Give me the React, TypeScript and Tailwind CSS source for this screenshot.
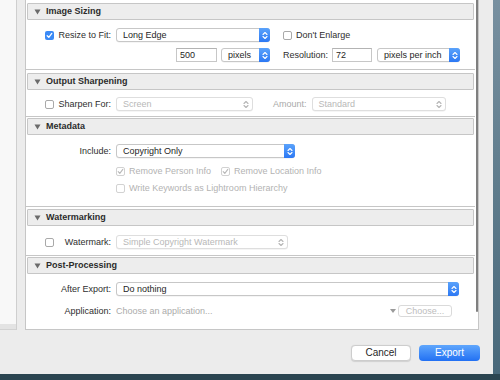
import React from 'react';

const FONT = "font-['Liberation_Sans',Arial,sans-serif]";

// Up/down chevrons used in macOS popup buttons
const Chevrons: React.FC<{ color: string }> = ({ color }) => (
  <svg width="6" height="9" viewBox="0 0 6 9" fill="none">
    <path d="M1 3.5 L3 1.5 L5 3.5" stroke={color} strokeWidth="1.1" strokeLinecap="round" strokeLinejoin="round" />
    <path d="M1 5.5 L3 7.5 L5 5.5" stroke={color} strokeWidth="1.1" strokeLinecap="round" strokeLinejoin="round" />
  </svg>
);

const Select: React.FC<{ value: string; width: string; disabled?: boolean }> = ({ value, width, disabled }) => (
  <div
    className={`${width} h-[14px] flex items-stretch rounded-[3px] border bg-white shadow-[0_0.5px_0.5px_rgba(0,0,0,0.08)] ${
      disabled ? 'border-[#dedede]' : 'border-[#c7c7c7]'
    }`}
  >
    <div className={`flex-1 pl-[6px] flex items-center text-[9px] leading-none truncate ${disabled ? 'text-[#b8b8b8]' : 'text-[#262626]'}`}>
      {value}
    </div>
    {disabled ? (
      <div className="w-[12px] flex items-center justify-center">
        <Chevrons color="#b5b5b5" />
      </div>
    ) : (
      <div className="w-[11px] -my-[1px] -mr-[1px] rounded-r-[3px] bg-gradient-to-b from-[#5aa2fb] to-[#2c78f4] flex items-center justify-center">
        <Chevrons color="#ffffff" />
      </div>
    )}
  </div>
);

const Input: React.FC<{ value: string; width: string }> = ({ value, width }) => (
  <div className={`${width} h-[14px] border border-[#c7c7c7] border-t-[#b3b3b3] bg-white pl-[3px] flex items-center text-[9px] leading-none text-[#262626]`}>
    {value}
  </div>
);

const Checkbox: React.FC<{ checked?: boolean; disabled?: boolean }> = ({ checked, disabled }) => {
  if (checked && !disabled) {
    return (
      <div className="w-[9px] h-[9px] rounded-[2px] bg-[#3b8af6] flex items-center justify-center shrink-0">
        <svg width="7" height="7" viewBox="0 0 7 7" fill="none">
          <path d="M1.2 3.7 L2.8 5.3 L5.8 1.4" stroke="white" strokeWidth="1.3" strokeLinecap="round" strokeLinejoin="round" />
        </svg>
      </div>
    );
  }
  return (
    <div
      className={`w-[9px] h-[9px] rounded-[2px] border bg-white flex items-center justify-center shrink-0 ${
        disabled ? 'border-[#d2d2d2]' : 'border-[#a9a9a9]'
      }`}
    >
      {checked && (
        <svg width="7" height="7" viewBox="0 0 7 7" fill="none">
          <path d="M1.2 3.7 L2.8 5.3 L5.8 1.4" stroke="#b9b9b9" strokeWidth="1.1" strokeLinecap="round" strokeLinejoin="round" />
        </svg>
      )}
    </div>
  );
};

const Label: React.FC<{ text: string; check?: boolean; checked?: boolean; disabled?: boolean }> = ({ text, check, checked, disabled }) => (
  <div className={`w-[85px] shrink-0 flex items-center ${check ? 'justify-between pl-[19px]' : 'justify-end'}`}>
    {check && <Checkbox checked={checked} />}
    <span className={`text-[9px] leading-none whitespace-nowrap ${disabled ? 'text-[#a9a9a9]' : 'text-[#2e2e2e]'}`}>{text}</span>
  </div>
);

const Header: React.FC<{ title: string; mt: string }> = ({ title, mt }) => (
  <div className={`${mt} mx-[1px] h-[17px] bg-[#ededed] border border-[#c6c6c6] rounded-[1px] flex items-center pl-[6px] gap-[5px]`}>
    <svg width="7" height="6" viewBox="0 0 7 6">
      <path d="M0.5 0.5 L6.5 0.5 L3.5 5.5 Z" fill="#6b6b6b" />
    </svg>
    <span className="text-[9px] font-bold text-[#2b2b2b] leading-none">{title}</span>
  </div>
);

const App: React.FC = () => {
  return (
    <div className={`w-[500px] h-[380px] flex flex-col bg-[#2c4652] overflow-hidden ${FONT}`}>
      <div className="flex h-[374px]">
        {/* Dialog window */}
        <div className="w-[493px] bg-[#ececec] flex flex-col">
          <div className="flex h-[330px]">
            {/* Left list panel */}
            <div className="w-[17px] h-[330px] flex flex-col border-r border-[#cfcfcf]">
              <div className="flex-1 bg-[#f8f8f8]" />
              <div className="h-[6px] bg-[#e3e3e3] border-b border-[#d2d2d2]" />
            </div>

            {/* Settings scroll panel */}
            <div className="ml-[8px] w-[454px] h-[330px] flex border-l border-b border-r border-[#c6c6c6] bg-white">
              <div className="w-[450px] flex flex-col">
                <div className="h-[2px]" />

                {/* Image Sizing */}
                <Header title="Image Sizing" mt="mt-[1px]" />
                <div className="h-[50px] pt-[8px] flex flex-col gap-[6px] border-b border-[#c6c6c6]">
                  <div className="flex items-center h-[14px]">
                    <Label text="Resize to Fit:" check checked />
                    <div className="ml-[5px] flex items-center">
                      <Select value="Long Edge" width="w-[154px]" />
                      <div className="ml-[13px] flex items-center gap-[4px]">
                        <Checkbox />
                        <span className="text-[9px] leading-none text-[#2e2e2e]">Don't Enlarge</span>
                      </div>
                    </div>
                  </div>
                  <div className="flex items-center h-[14px] pl-[150px]">
                    <Input value="500" width="w-[41px]" />
                    <div className="ml-[4px]">
                      <Select value="pixels" width="w-[49px]" />
                    </div>
                    <span className="ml-[13px] text-[9px] leading-none text-[#2e2e2e]">Resolution:</span>
                    <div className="ml-[4px]">
                      <Input value="72" width="w-[40px]" />
                    </div>
                    <div className="ml-[5px]">
                      <Select value="pixels per inch" width="w-[83px]" />
                    </div>
                  </div>
                </div>

                {/* Output Sharpening */}
                <Header title="Output Sharpening" mt="mt-[3px]" />
                <div className="h-[27px] pt-[7px] border-b border-[#c6c6c6]">
                  <div className="flex items-center h-[14px]">
                    <Label text="Sharpen For:" check />
                    <div className="ml-[5px]">
                      <Select value="Screen" width="w-[137px]" disabled />
                    </div>
                    <span className="ml-[20px] text-[9px] leading-none text-[#a9a9a9]">Amount:</span>
                    <div className="ml-[5px]">
                      <Select value="Standard" width="w-[134px]" disabled />
                    </div>
                  </div>
                </div>

                {/* Metadata */}
                <Header title="Metadata" mt="mt-[1px]" />
                <div className="h-[72px] pt-[9px] flex flex-col border-b border-[#c6c6c6]">
                  <div className="flex items-center h-[14px]">
                    <Label text="Include:" />
                    <div className="ml-[5px]">
                      <Select value="Copyright Only" width="w-[179px]" />
                    </div>
                  </div>
                  <div className="mt-[7px] h-[12px] flex items-center pl-[90px]">
                    <Checkbox checked disabled />
                    <span className="ml-[4px] text-[9px] leading-none text-[#b3b3b3]">Remove Person Info</span>
                    <div className="ml-[10px]">
                      <Checkbox checked disabled />
                    </div>
                    <span className="ml-[4px] text-[9px] leading-none text-[#b3b3b3]">Remove Location Info</span>
                  </div>
                  <div className="mt-[5px] h-[12px] flex items-center pl-[90px]">
                    <Checkbox disabled />
                    <span className="ml-[4px] text-[9px] leading-none text-[#b3b3b3]">Write Keywords as Lightroom Hierarchy</span>
                  </div>
                </div>

                {/* Watermarking */}
                <Header title="Watermarking" mt="mt-[2px]" />
                <div className="h-[30px] pt-[9px] border-b border-[#c6c6c6]">
                  <div className="flex items-center h-[14px]">
                    <Label text="Watermark:" check />
                    <div className="ml-[5px]">
                      <Select value="Simple Copyright Watermark" width="w-[172px]" disabled />
                    </div>
                  </div>
                </div>

                {/* Post-Processing */}
                <Header title="Post-Processing" mt="mt-[1px]" />
                <div className="flex-1 pt-[8px] flex flex-col">
                  <div className="flex items-center h-[14px]">
                    <Label text="After Export:" />
                    <div className="ml-[5px]">
                      <Select value="Do nothing" width="w-[343px]" />
                    </div>
                  </div>
                  <div className="mt-[9px] flex items-center h-[12px]">
                    <Label text="Application:" />
                    <span className="ml-[5px] w-[274px] text-[9px] leading-none text-[#ababab]">Choose an application...</span>
                    <svg width="6" height="4" viewBox="0 0 6 4">
                      <path d="M0 0 L6 0 L3 4 Z" fill="#9a9a9a" />
                    </svg>
                    <div className="ml-[2px] w-[54px] h-[12px] rounded-[3px] border border-[#dadada] bg-white flex items-center justify-center text-[9px] leading-none text-[#bdbdbd]">
                      Choose...
                    </div>
                  </div>
                </div>
              </div>

              {/* Scrollbar */}
              <div className="w-[3px] flex flex-col items-end">
                <div className="w-[2px] h-[312px] bg-[#7f7f7f] rounded-b-full" />
              </div>
            </div>
          </div>

          {/* Dialog buttons */}
          <div className="mt-[15px] flex justify-end gap-[8px] pr-[13px]">
            <button className="w-[60px] h-[16px] rounded-[4px] bg-white border border-[#cdcdcd] shadow-[0_0.5px_1px_rgba(0,0,0,0.12)] text-[10px] leading-none text-[#262626]">
              Cancel
            </button>
            <button className="w-[61px] h-[16px] rounded-[4px] bg-gradient-to-b from-[#5fa6fc] to-[#2170f3] text-[10px] leading-none text-white">
              Export
            </button>
          </div>
        </div>

        {/* Desktop on the right */}
        <div className="flex-1 bg-gradient-to-b from-[#7890a0] via-[#5f7c8c] to-[#48687a]" />
      </div>
      <div className="h-[6px] bg-[#2b4551]" />
    </div>
  );
};

export default App;
